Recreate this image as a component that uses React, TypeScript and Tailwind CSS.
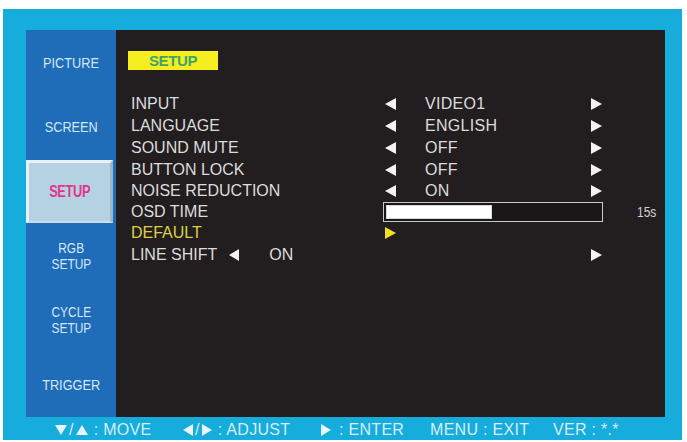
import React from "react";

const Tri = ({ dir, color = "#f2f2f2", w = 11, h = 12 }: { dir: "left" | "right" | "up" | "down"; color?: string; w?: number; h?: number }) => {
  const pts =
    dir === "left"
      ? `${w},0 ${w},${h} 0,${h / 2}`
      : dir === "right"
      ? `0,0 0,${h} ${w},${h / 2}`
      : dir === "up"
      ? `0,${h} ${w},${h} ${w / 2},0`
      : `0,0 ${w},0 ${w / 2},${h}`;
  return (
    <svg width={w} height={h} viewBox={`0 0 ${w} ${h}`} className="block shrink-0">
      <polygon points={pts} fill={color} />
    </svg>
  );
};

const SideItem = ({ lines, selected }: { lines: string[]; selected?: boolean }) => {
  if (selected) {
    return (
      <div className="flex items-center justify-center">
        <div className="w-[87px] h-[63px] mr-[3px] flex items-center justify-center bg-[#b4d2e2] border-t-[3px] border-l-[3px] border-[#e6f2f8] border-r-[3px] border-r-[#9fb6c4] border-b-[2px] border-b-[#c8dde9]">
          <span className="inline-block scale-x-[0.8] text-[16px] font-bold text-[#e2358a] tracking-tight">SETUP</span>
        </div>
      </div>
    );
  }
  return (
    <div className="flex flex-col items-center justify-center text-[#d6e8f7]">
      {lines.map((l) => (
        <span key={l} className={`block scale-x-[0.85] ${lines.length > 1 ? "text-[14px] leading-[16px]" : "text-[15px] leading-[17px]"}`}>
          {l}
        </span>
      ))}
    </div>
  );
};

const Row = ({ h, label, value, yellow }: { h: number; label: string; value?: string; yellow?: boolean }) => (
  <div className="flex items-center" style={{ height: h }}>
    <div className={`w-[254px] ${yellow ? "text-[#ded046]" : "text-[#dcdcdc]"}`}>{label}</div>
    <div className="w-[40px]">{value !== undefined ? <Tri dir="left" w={11} h={12} /> : yellow ? <Tri dir="right" color="#f0e020" w={11} h={12} /> : null}</div>
    <div className="w-[166px] text-[#dcdcdc] tracking-[0.3px]">{value}</div>
    {value !== undefined && <Tri dir="right" w={11} h={12} />}
  </div>
);

export default function App() {
  return (
    <div
      className="w-[687px] h-[442px] bg-white pt-[9px] pl-[3px] pr-[5px] pb-[2px]"
      style={{ fontFamily: '"Liberation Sans", Arial, sans-serif' }}
    >
      <div className="h-full bg-[#16acdc] flex flex-col pt-[21px] pl-[23px] pr-[17px]">
        <div className="flex h-[387px]">
          <div className="w-[90px] bg-[#1f6cb8] grid grid-rows-6">
            <SideItem lines={["PICTURE"]} />
            <SideItem lines={["SCREEN"]} />
            <SideItem lines={["SETUP"]} selected />
            <SideItem lines={["RGB", "SETUP"]} />
            <SideItem lines={["CYCLE", "SETUP"]} />
            <SideItem lines={["TRIGGER"]} />
          </div>
          <div className="flex-1 bg-[#221e1f] pl-[12px] pt-[21px] text-[16px] leading-[18px]">
            <div className="w-[90px] h-[19px] bg-[#f6ee1e] flex items-center justify-center">
              <span className="text-[15px] font-bold text-[#3ea46e] tracking-tight">SETUP</span>
            </div>
            <div className="mt-[22px] pl-[3px]">
              <Row h={23} label="INPUT" value="VIDEO1" />
              <Row h={22} label="LANGUAGE" value="ENGLISH" />
              <Row h={22} label="SOUND MUTE" value="OFF" />
              <Row h={21} label="BUTTON LOCK" value="OFF" />
              <Row h={21} label="NOISE REDUCTION" value="ON" />
              <div className="flex items-center h-[21px]">
                <div className="w-[252px] text-[#dcdcdc]">OSD TIME</div>
                <div className="w-[220px] h-[20px] border border-[#c8c8c8] p-[2px] bg-[#1a1718]">
                  <div className="h-full w-[106px] bg-white border border-[#d8d8d8]" />
                </div>
                <div className="ml-[34px] text-[15px] text-[#d0d0d0] inline-block scale-x-[0.8] origin-left">15s</div>
              </div>
              <Row h={22} label="DEFAULT" yellow />
              <div className="flex items-center h-[22px]">
                <div className="w-[460px] flex items-center text-[#dcdcdc]">
                  <span>LINE SHIFT</span>
                  <span className="ml-[12px]"><Tri dir="left" w={10} h={12} /></span>
                  <span className="ml-[30px]">ON</span>
                </div>
                <Tri dir="right" w={11} h={12} />
              </div>
            </div>
          </div>
        </div>
        <div className="h-[23px] pt-[3px] pl-[29px] flex items-center text-[16px] text-[#d8eef8] tracking-[0.3px]">
          <div className="w-[128px] flex items-center">
            <Tri dir="down" color="#e8f6fc" w={12} h={10} />
            <span className="mx-[2px]">/</span>
            <Tri dir="up" color="#e8f6fc" w={12} h={10} />
            <span className="ml-[6px]">: MOVE</span>
          </div>
          <div className="w-[138px] flex items-center">
            <Tri dir="left" color="#e8f6fc" w={10} h={12} />
            <span className="mx-[2px]">/</span>
            <Tri dir="right" color="#e8f6fc" w={10} h={12} />
            <span className="ml-[6px]">: ADJUST</span>
          </div>
          <div className="w-[109px] flex items-center">
            <Tri dir="right" color="#e8f6fc" w={10} h={12} />
            <span className="ml-[8px]">: ENTER</span>
          </div>
          <div className="w-[123px]">MENU : EXIT</div>
          <div>VER : *.*</div>
        </div>
      </div>
    </div>
  );
}
